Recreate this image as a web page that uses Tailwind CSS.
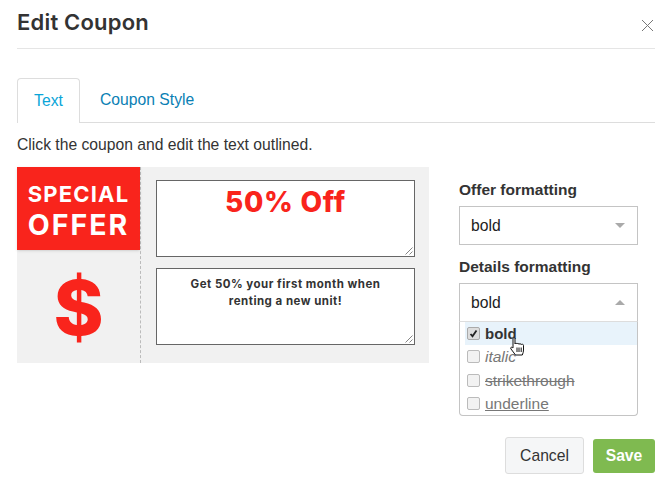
<!DOCTYPE html>
<html lang="en">
<head>
  <meta charset="UTF-8">
  <title>Edit Coupon</title>
  <script src="https://cdn.jsdelivr.net/npm/@tailwindcss/browser@4"></script>
</head>
<body class="bg-white w-[669px] h-[487px] overflow-hidden font-['Liberation_Sans',Arial,sans-serif] text-[#333]">
  <div class="pl-[17px] pr-[14px]">
    <!-- header -->
    <div class="h-[49px] border-b border-[#e5e5e5] flex items-start justify-between">
      <h1 class="font-['Inter',sans-serif] font-semibold text-[22px] leading-[24px] tracking-[0.2px] mt-[10px] text-[#333]">Edit Coupon</h1>
      <svg class="mt-[19px] mr-[1px]" width="13" height="13" viewBox="0 0 13 13" fill="none" stroke="#777" stroke-width="1"><path d="M1 1l11 11M12 1L1 12"/></svg>
    </div>

    <!-- tabs -->
    <div class="mt-[29px] h-[45px] border-b border-[#ddd] flex">
      <div class="w-[63px] h-[45px] border border-b-0 border-[#ddd] rounded-t-[4px] bg-white flex items-center justify-center text-[15.7px] text-[#0aa5d8]">Text</div>
      <div class="ml-[20px] h-[44px] flex items-center text-[15.7px] text-[#0a80b4]">Coupon Style</div>
    </div>
    <p class="mt-[13px] text-[15.7px] leading-[18px] text-[#333]">Click the coupon and edit the text outlined.</p>

    <div class="mt-[13px] flex">
      <!-- coupon -->
      <div class="w-[412px] h-[196px] bg-[#f1f1f1] flex">
        <div class="w-[124px] border-r border-dashed border-[#bbb] flex flex-col">
          <div class="w-[123px] h-[83px] bg-[#f9241c] text-white font-['Inter',sans-serif] font-bold flex flex-col items-center pt-[14px] shadow-sm">
            <span class="text-[22px] leading-[26px] tracking-[1.2px]">SPECIAL</span>
            <span class="text-[28.5px] leading-[36px] tracking-[2px]">OFFER</span>
          </div>
          <div class="flex-1 flex items-start justify-center text-[#f9241c] font-['Inter',sans-serif] font-extrabold text-[76px] leading-[90px] pt-[12px]">$</div>
        </div>
        <div class="pl-[15px] pt-[13px] flex flex-col gap-[11px]">
          <div class="relative w-[259px] h-[77px] bg-white border border-[#666] text-center text-[#f9241c] font-['Inter',sans-serif] font-extrabold text-[28px] leading-[40px] tracking-[0.7px] pt-[1px]">
            50% Off
            <svg class="absolute right-[1px] bottom-[1px]" width="8" height="8" viewBox="0 0 8 8" fill="none" stroke="#666" stroke-width="0.8"><path d="M0.5 7.5l7-7M4.5 7.5l3-3"/></svg>
          </div>
          <div class="relative w-[259px] h-[77px] bg-white border border-[#666] text-center text-[#333] font-['Inter',sans-serif] font-bold text-[11.5px] leading-[17px] tracking-[0.48px] pt-[7px]">
            Get 50% your first month when<br>renting a new unit!
            <svg class="absolute right-[1px] bottom-[1px]" width="8" height="8" viewBox="0 0 8 8" fill="none" stroke="#666" stroke-width="0.8"><path d="M0.5 7.5l7-7M4.5 7.5l3-3"/></svg>
          </div>
        </div>
      </div>

      <!-- formatting -->
      <div class="ml-[30px] w-[179px] mt-[14px]">
        <div class="font-bold text-[15.5px] leading-[18px] text-[#333]">Offer formatting</div>
        <div class="mt-[7px] h-[39px] border border-[#c4c4c4] flex items-center justify-between pl-[11px] pr-[12px] text-[15.7px] text-[#222]">
          bold
          <span class="w-0 h-0 border-x-[5px] border-x-transparent border-t-[5px] border-t-[#aaa]"></span>
        </div>
        <div class="mt-[13px] font-bold text-[15.5px] leading-[18px] text-[#333]">Details formatting</div>
        <div class="mt-[7px] h-[39px] border border-[#c4c4c4] border-b-[#ddd] flex items-center justify-between pl-[11px] pr-[12px] text-[15.7px] text-[#222]">
          bold
          <span class="w-0 h-0 border-x-[5px] border-x-transparent border-b-[5px] border-b-[#aaa]"></span>
        </div>
        <div class="relative h-[94px] border border-t-0 border-[#c4c4c4] rounded-b-[4px] pl-[5px] text-[15.5px] leading-[23px]">
          <div class="h-[23px] bg-[#e8f3fb] flex items-center gap-[5px] pl-[2px] font-bold text-[15px] text-[#333]">
            <span class="w-[13px] h-[13px] rounded-[2px] border border-[#aaa] bg-[#ddd] flex items-center justify-center">
              <svg width="9" height="9" viewBox="0 0 9 9" fill="none" stroke="#222" stroke-width="1.8"><path d="M1.5 5l2 2.2L7.5 1.5"/></svg>
            </span>
            bold
          </div>
          <div class="h-[23px] flex items-center gap-[5px] pl-[2px] italic text-[#777]">
            <span class="w-[13px] h-[13px] rounded-[2px] border border-[#bbb] bg-[#f2f2f2]"></span>
            italic
          </div>
          <div class="h-[24px] flex items-center gap-[5px] pl-[2px] line-through text-[#777]">
            <span class="w-[13px] h-[13px] rounded-[2px] border border-[#bbb] bg-[#f2f2f2]"></span>
            strikethrough
          </div>
          <div class="h-[23px] flex items-center gap-[5px] pl-[2px] text-[#777]">
            <span class="w-[13px] h-[13px] rounded-[2px] border border-[#bbb] bg-[#f2f2f2]"></span>
            <span class="underline">underline</span>
          </div>
          <!-- hand cursor -->
          <svg class="absolute left-[48px] top-[15px]" width="19" height="20" viewBox="0 0 17 20" fill="#fff" stroke="#111" stroke-width="1" stroke-linejoin="round">
            <path d="M4 1.500c0-1 2-1 2 0V7c0-1 2-1 2 0 0-.8 2-.8 2 .3 0-.8 2.200-.8 2.200.4 0-.7 2.300-.7 2.300.6V13c0 2-.5 3-1.200 5H6.500L2 12c-1-1.500.5-2.500 2-1z"/>
            <path d="M8 10.500v4.500M10 10.500v4.500M12.200 10.500v4.500" fill="none"/>
          </svg>
        </div>
      </div>
    </div>

    <!-- footer -->
    <div class="mt-[21px] flex justify-end items-center gap-[9px]">
      <button class="w-[79px] h-[37px] bg-[#f5f6f7] border border-[#ddd] rounded-[3px] text-[15.7px] text-[#333]">Cancel</button>
      <button class="w-[62px] h-[34px] bg-[#7fba50] rounded-[3px] text-[15.7px] font-bold text-white">Save</button>
    </div>
  </div>
</body>
</html>
